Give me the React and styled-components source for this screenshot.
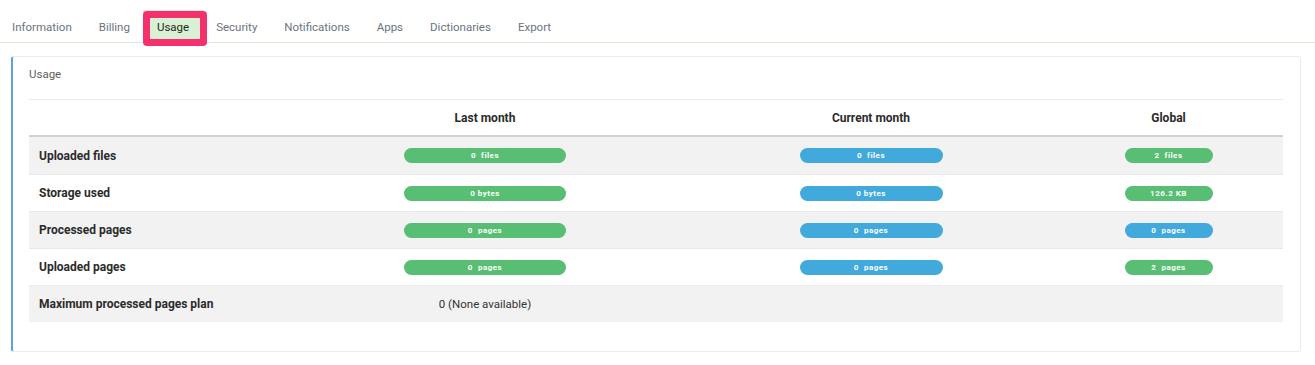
import styled, { createGlobalStyle } from "styled-components";

const GlobalStyle = createGlobalStyle`
  body {
    margin: 0;
    background: #fff;
    font-family: Roboto, "Liberation Sans", Arial, sans-serif;
    color: #2b2b2b;
  }
`;

const TabBar = styled.div`
  display: flex;
  height: 32px;
  padding-top: 10px;
  padding-left: 0;
  border-bottom: 1px solid #d9ecd2;
  & > div:first-child {
    padding-left: 12px;
  }
`;

const Tab = styled.div`
  position: relative;
  display: flex;
  align-items: center;
  padding: 2px 13.5px 0 13.5px;
  font-size: 11.5px;
  color: ${(props) => (props.active ? "#1f2a22" : "#6b7480")};
  background: ${(props) => (props.active ? "#d9f0d4" : "transparent")};
  z-index: 1;
  &::before {
    content: "";
    display: ${(props) => (props.active ? "block" : "none")};
    position: absolute;
    top: 1px;
    left: 0;
    right: -4px;
    bottom: -4px;
    border: 7px solid #f5316d;
    border-radius: 4px;
  }
`;

const Panel = styled.div`
  margin: 13px 14px 0 11px;
  padding: 0 17px 29px 16px;
  border: 1px solid #ececec;
  border-left: 2px solid #5aa5e0;
  border-radius: 3px;
`;

const PanelTitle = styled.div`
  height: 43px;
  padding-top: 10px;
  box-sizing: border-box;
  font-size: 11.5px;
  color: #5f5f5f;
  border-bottom: 1px solid #ebebeb;
`;

const Grid = styled.div`
  display: grid;
  grid-template-columns: 253px 406px 366px 1fr;
`;

const HeadCell = styled.div`
  height: 35px;
  display: flex;
  align-items: center;
  justify-content: center;
  font-size: 12px;
  font-weight: 700;
  color: #2b2b2b;
  border-bottom: 2px solid #cfd3d7;
`;

const Row = styled.div`
  display: contents;
  & > div {
    background: ${(props) => (props.$striped ? "#f2f2f2" : "#fff")};
    border-top: ${(props) => (props.$first ? "none" : "1px solid #e9e9e9")};
  }
`;

const LabelCell = styled.div`
  height: 37px;
  box-sizing: border-box;
  display: flex;
  align-items: center;
  padding-left: 10px;
  font-size: 12px;
  font-weight: 700;
  color: #2b2b2b;
`;

const ValueCell = styled.div`
  height: 37px;
  box-sizing: border-box;
  display: flex;
  align-items: center;
  justify-content: center;
  font-size: 11.5px;
  color: #333;
`;

const Pill = styled.div`
  width: ${(props) => props.$width}px;
  height: 15px;
  border-radius: 8px;
  background: ${(props) => (props.$tone === "blue" ? "#41a9dc" : "#57be73")};
  color: #fff;
  font-size: 8px;
  font-weight: 700;
  letter-spacing: 0.5px;
  white-space: pre;
  display: flex;
  align-items: center;
  justify-content: center;
`;

const tabs = [
  "Information",
  "Billing",
  "Usage",
  "Security",
  "Notifications",
  "Apps",
  "Dictionaries",
  "Export",
];

const rows = [
  { label: "Uploaded files", last: "0  files", current: "0  files", global: ["2  files", "green"] },
  { label: "Storage used", last: "0 bytes", current: "0 bytes", global: ["126.2 KB", "green"] },
  { label: "Processed pages", last: "0  pages", current: "0  pages", global: ["0  pages", "blue"] },
  { label: "Uploaded pages", last: "0  pages", current: "0  pages", global: ["2  pages", "green"] },
];

export default function App() {
  return (
    <>
      <GlobalStyle />
      <TabBar>
        {tabs.map((t) => (
          <Tab key={t} active={t === "Usage"}>
            {t}
          </Tab>
        ))}
      </TabBar>
      <Panel>
        <PanelTitle>Usage</PanelTitle>
        <Grid>
          <HeadCell />
          <HeadCell>Last month</HeadCell>
          <HeadCell>Current month</HeadCell>
          <HeadCell>Global</HeadCell>
          {rows.map((r, i) => (
            <Row key={r.label} $striped={i % 2 === 0} $first={i === 0}>
              <LabelCell>{r.label}</LabelCell>
              <ValueCell>
                <Pill $width={162}>{r.last}</Pill>
              </ValueCell>
              <ValueCell>
                <Pill $width={143} $tone="blue">
                  {r.current}
                </Pill>
              </ValueCell>
              <ValueCell>
                <Pill $width={88} $tone={r.global[1]}>
                  {r.global[0]}
                </Pill>
              </ValueCell>
            </Row>
          ))}
          <Row $striped>
            <LabelCell>Maximum processed pages plan</LabelCell>
            <ValueCell>0 (None available)</ValueCell>
            <ValueCell />
            <ValueCell />
          </Row>
        </Grid>
      </Panel>
    </>
  );
}
